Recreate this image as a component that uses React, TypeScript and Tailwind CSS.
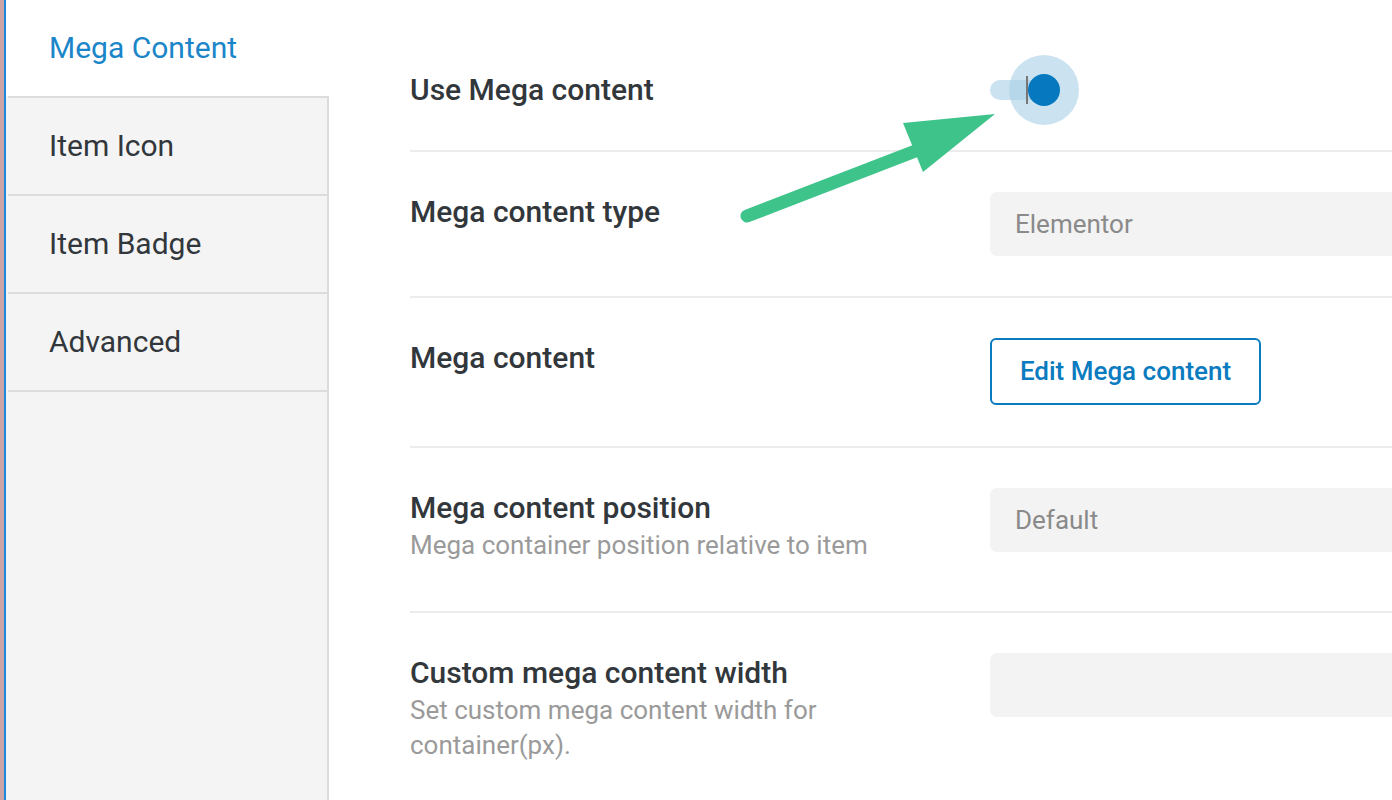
import type { ReactNode } from "react";

const tabs = ["Mega Content", "Item Icon", "Item Badge", "Advanced"];

function Row({
  label,
  description,
  children,
  first,
}: {
  label: string;
  description?: string;
  children?: ReactNode;
  first?: boolean;
}) {
  return (
    <div
      className={`flex items-start pt-[40px] pb-[40px] ${
        first ? "" : "border-t-2 border-[#ececec]"
      }`}
    >
      <div className="w-[580px] shrink-0 pr-[100px]">
        <div className="text-[30px] leading-[40px] font-medium text-[#32373c]">
          {label}
        </div>
        {description && (
          <div className="mb-[8px] text-[26px] leading-[35px] text-[#9a9a9a]">
            {description}
          </div>
        )}
      </div>
      <div className="flex-1">{children}</div>
    </div>
  );
}

function FakeSelect({ value }: { value?: string }) {
  return (
    <div className="flex h-[64px] items-center rounded-l-[7px] bg-[#f3f3f3] pl-[25px] text-[26px] text-[#8a8a8a]">
      {value}
    </div>
  );
}

function Toggle() {
  return (
    <div className="relative h-[40px] w-[80px]">
      <div className="absolute left-0 top-[10px] h-[20px] w-[56px] rounded-full bg-[#cbe2f0]" />
      <div className="absolute left-[19px] top-[-15px] h-[70px] w-[70px] rounded-full bg-[#a9cfe6]/60" />
      <div className="absolute left-[36px] top-[6px] h-[28px] w-[2px] bg-[#777]" />
      <div className="absolute left-[38px] top-[4px] h-[32px] w-[32px] rounded-full bg-[#0578bf]" />
    </div>
  );
}

export default function App() {
  return (
    <div
      className="relative flex h-[800px] w-[1392px] overflow-hidden bg-white"
      style={{ fontFamily: "Roboto, 'Liberation Sans', sans-serif" }}
    >
      <div className="w-[4px] shrink-0 bg-[#cfa4a6]" />
      <div className="w-[2px] shrink-0 bg-[#1d88dc]" />

      <aside className="flex w-[323px] shrink-0 flex-col bg-[#f4f4f4]">
        {tabs.map((tab, i) =>
          i === 0 ? (
            <div
              key={tab}
              className="flex h-[96px] items-center bg-white pb-[2px] pl-[43px] text-[30px] text-[#1a86c9]"
            >
              {tab}
            </div>
          ) : (
            <div
              key={tab}
              className="ml-[2px] flex h-[98px] items-center border-t-2 border-r-2 border-[#dcdcdc] pb-[2px] pl-[41px] text-[30px] text-[#32373c]"
            >
              {tab}
            </div>
          )
        )}
        <div className="ml-[2px] flex-1 border-t-2 border-r-2 border-[#dcdcdc]" />
      </aside>

      <main className="flex-1 pl-[81px] pt-[30px]">
        <Row label="Use Mega content" first>
          <Toggle />
        </Row>
        <Row label="Mega content type">
          <FakeSelect value="Elementor" />
        </Row>
        <Row label="Mega content">
          <button className="mb-[1px] flex h-[67px] w-[271px] items-center justify-center rounded-[6px] border-2 border-[#0a7bbf] text-[26px] font-medium text-[#0a7bbf]">
            Edit Mega content
          </button>
        </Row>
        <Row
          label="Mega content position"
          description="Mega container position relative to item"
        >
          <FakeSelect value="Default" />
        </Row>
        <Row
          label="Custom mega content width"
          description="Set custom mega content width for container(px)."
        >
          <FakeSelect />
        </Row>
      </main>

      <svg
        className="pointer-events-none absolute left-0 top-0"
        width="1392"
        height="800"
      >
        <line
          x1="747"
          y1="216"
          x2="918"
          y2="150"
          stroke="#3ec48a"
          strokeWidth="13"
          strokeLinecap="round"
        />
        <polygon points="903,123 995,114 923,172" fill="#3ec48a" />
      </svg>
    </div>
  );
}
